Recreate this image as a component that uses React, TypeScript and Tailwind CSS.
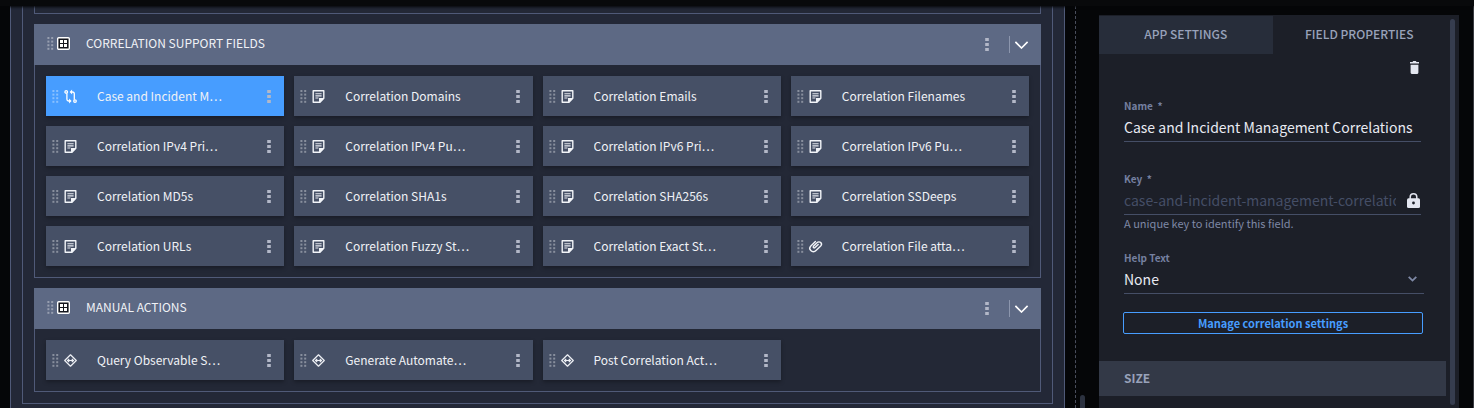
import type { ReactNode } from 'react'

type Kind = 'reference' | 'note' | 'file' | 'action'
type Field = { label: string; kind: Kind; selected?: boolean }

const supportFields: Field[] = [
  { label: 'Case and Incident M…', kind: 'reference', selected: true },
  { label: 'Correlation Domains', kind: 'note' },
  { label: 'Correlation Emails', kind: 'note' },
  { label: 'Correlation Filenames', kind: 'note' },
  { label: 'Correlation IPv4 Pri…', kind: 'note' },
  { label: 'Correlation IPv4 Pu…', kind: 'note' },
  { label: 'Correlation IPv6 Pri…', kind: 'note' },
  { label: 'Correlation IPv6 Pu…', kind: 'note' },
  { label: 'Correlation MD5s', kind: 'note' },
  { label: 'Correlation SHA1s', kind: 'note' },
  { label: 'Correlation SHA256s', kind: 'note' },
  { label: 'Correlation SSDeeps', kind: 'note' },
  { label: 'Correlation URLs', kind: 'note' },
  { label: 'Correlation Fuzzy St…', kind: 'note' },
  { label: 'Correlation Exact St…', kind: 'note' },
  { label: 'Correlation File atta…', kind: 'file' },
]

const manualActions: Field[] = [
  { label: 'Query Observable S…', kind: 'action' },
  { label: 'Generate Automate…', kind: 'action' },
  { label: 'Post Correlation Act…', kind: 'action' },
]

function DragHandle() {
  return (
    <svg className="h-[13px] w-[7px] shrink-0 cursor-grab" viewBox="0 0 7 13" fill="#fff" fillOpacity="0.36" aria-hidden="true">
      {[0, 3.6, 7.2, 10.8].map((y) => (
        <g key={y}>
          <rect x="0.4" y={y} width="2" height="2" />
          <rect x="4.2" y={y} width="2" height="2" />
        </g>
      ))}
    </svg>
  )
}

function Kebab({ label }: { label: string }) {
  return (
    <button type="button" aria-label={`${label} menu`} className="shrink-0">
      <svg className="block h-[13px] w-1" viewBox="0 0 4 13" fill="#b3b8c8" aria-hidden="true">
        <rect x="0.2" y="0" width="3.6" height="3" />
        <rect x="0.2" y="5" width="3.6" height="3" />
        <rect x="0.2" y="10" width="3.6" height="3" />
      </svg>
    </button>
  )
}

function KindIcon({ kind }: { kind: Kind }) {
  const cls = 'h-[13px] w-[13px] shrink-0 overflow-visible'
  if (kind === 'reference')
    return (
      <svg className={cls} viewBox="0 0 13 13" fill="none" stroke="#fff" strokeWidth="1.3" aria-hidden="true">
        <circle cx="2.2" cy="1.9" r="1.3" />
        <circle cx="11" cy="11.1" r="1.3" />
        <path d="M2.9 3.2v6q0 1.8 1.8 1.8h1.3" />
        <path d="M10.3 9.8V3.8q0-1.8-1.8-1.8H7.2" />
        <path d="M5.1 8.5l2.5 2.5-2.5 2.5zM8.1-0.5L5.6 2l2.5 2.5z" fill="#fff" stroke="none" />
      </svg>
    )
  if (kind === 'file')
    return (
      <svg className={cls} viewBox="0 0 13 13" fill="none" stroke="#f2f4f8" strokeWidth="1.4" strokeLinecap="round" aria-hidden="true">
        <path d="M9.2 4.4L5.8 7.7a1 1 0 0 1-1.4-1.4l3.8-3.7a2.4 2.4 0 0 1 3.5 0 2.5 2.5 0 0 1 0 3.5l-4.7 4.5a3.6 3.6 0 0 1-5.2 0 3.4 3.4 0 0 1 0-4.7L6.4 1.5" />
      </svg>
    )
  if (kind === 'action')
    return (
      <svg className={cls} viewBox="0 0 13 13" fill="none" stroke="#eef0f5" strokeWidth="1.2" aria-hidden="true">
        <path d="M6.5 0.8l5.8 5.7-5.8 5.7L0.7 6.5z" strokeLinejoin="round" />
        <path d="M3.8 6.5h5.4M5.2 4.8L3.5 6.5l1.7 1.7M7.8 4.8l1.7 1.7-1.7 1.7" />
      </svg>
    )
  return (
    <svg className={cls} viewBox="0 0 13 13" aria-hidden="true">
      <path d="M1.2 0.8h10.6v7.4L8 12.2H1.2z" fill="none" stroke="#f2f4f8" strokeWidth="1.4" strokeLinejoin="round" />
      <path d="M7 12.6V8h5.2z" fill="#f2f4f8" />
      <path d="M3.4 3.8h6.2M3.4 5.9h6.2M3.4 8h3" stroke="#e3e6ee" strokeWidth="1.1" />
    </svg>
  )
}

function FieldCard({ field }: { field: Field }) {
  return (
    <div
      className={`flex h-10 min-w-0 items-center pr-[13px] pl-1.5 shadow-[0_2px_4px_rgba(0,0,0,0.3)] ${
        field.selected ? 'bg-[#479dff]' : 'bg-[#465066]'
      }`}
    >
      <DragHandle />
      <span className="w-[5px] shrink-0" />
      <KindIcon kind={field.kind} />
      <span className="ml-5 flex-1 truncate text-[12px] leading-5 text-[#f0f2f6]">{field.label}</span>
      <Kebab label={field.label} />
    </div>
  )
}

function Section({ title, fields }: { title: string; fields: Field[] }) {
  return (
    <section className="border border-[#505a78] bg-[#232836]">
      <header className="-mx-px -mt-px flex h-[41px] items-center bg-[#5d6984] pr-3 pl-[13px]">
        <div className="flex min-w-0 flex-1 items-center pb-[3px]">
          <DragHandle />
          <svg className="ml-[3px] h-[13px] w-[13px] shrink-0" viewBox="0 0 13 13" aria-hidden="true">
            <rect x="0.7" y="0.7" width="11.6" height="11.6" rx="1" fill="#14161d" stroke="#fff" strokeWidth="1.4" />
            <path d="M3 3h3v3h-3zM7 3h3v3h-3zM3 7h3v3h-3zM7 7h3v3h-3z" fill="#fff" />
          </svg>
          <h2 className="ml-4 truncate text-[12px] leading-5 text-[#f0f2f6]">{title}</h2>
        </div>
        <Kebab label={title} />
        <span className="ml-5 h-[17px] w-px bg-[#8c96ad]" />
        <button type="button" aria-label={`Collapse ${title}`} className="ml-[5px]">
          <svg className="block h-2 w-[14px]" viewBox="0 0 14 8" fill="none" stroke="#fff" strokeWidth="1.6" aria-hidden="true">
            <path d="M0.4 0.9L6.5 7L12.6 0.9" />
          </svg>
        </button>
      </header>
      <div className="grid grid-cols-4 gap-[10px] px-[11px] pt-[11px] pb-[11px]">
        {fields.map((field) => (
          <FieldCard key={field.label} field={field} />
        ))}
      </div>
    </section>
  )
}

function FieldLabel({ htmlFor, children }: { htmlFor: string; children: ReactNode }) {
  return (
    <label htmlFor={htmlFor} className="block text-[10px] leading-4 font-semibold text-[#7580a0]">
      {children}
    </label>
  )
}

function Properties() {
  return (
    <aside className="mt-[9px] flex w-[360px] shrink-0 bg-[#1c1f28] pt-px">
      <div className="min-w-0 flex-1">
        <div role="tablist" className="grid h-[38px] grid-cols-2 text-[12px] leading-5 font-medium text-[#98a2ba]">
          <button type="button" role="tab" aria-selected="false" className="bg-[#272d3a] pb-[2px]">
            APP SETTINGS
          </button>
          <button type="button" role="tab" aria-selected="true" className="pb-[2px]">
            FIELD PROPERTIES
          </button>
        </div>
        <form className="px-[25px]" onSubmit={(e) => e.preventDefault()}>
          <div className="flex justify-end pt-[7px] pr-[2px]">
            <button type="button" aria-label="Delete field">
              <svg className="block h-[13px] w-[9px]" viewBox="0 0 9 13" fill="#e3e6f0" aria-hidden="true">
                <path d="M0 1h2.5L3.2 0h2.6l.7 1H9v1.5H0zM0.6 3.7h7.8v7.9q0 1.4-1.2 1.4H1.8q-1.2 0-1.2-1.4z" />
              </svg>
            </button>
          </div>
          <div className="pt-6">
            <FieldLabel htmlFor="field-name">Name&nbsp; *</FieldLabel>
            <input
              id="field-name"
              defaultValue="Case and Incident Management Correlations"
              className="block h-[28px] w-full border-b border-[#454e66] bg-transparent pb-[2px] text-[14px] leading-5 text-[#e8eaf2] outline-none"
            />
          </div>
          <div className="pt-[29px]">
            <FieldLabel htmlFor="field-key">Key&nbsp; *</FieldLabel>
            <div className="flex h-[28px] items-center border-b border-[#454e66] text-[#454e66]">
              <input
                id="field-key"
                readOnly
                value="case-and-incident-management-correlations"
                className="h-[27px] min-w-0 flex-1 bg-transparent pb-[2px] text-[14px] leading-5 outline-none"
              />
              <svg className="mr-px ml-[11px] h-[15px] w-[13px] shrink-0" viewBox="0 0 13 15" aria-hidden="true">
                <path d="M3.2 6V3.9a3.3 3.1 0 0 1 6.6 0V6" fill="none" stroke="#e3e6f0" strokeWidth="1.5" />
                <rect y="5.2" width="13" height="9.8" rx="1.5" fill="#e3e6f0" />
                <circle cx="6.5" cy="10" r="1.4" fill="#1c1f28" />
              </svg>
            </div>
            <p className="text-[11px] leading-4 text-[#7f89a6]">A unique key to identify this field.</p>
          </div>
          <div className="-mr-[3px] pt-[19px]">
            <FieldLabel htmlFor="help-text">Help Text</FieldLabel>
            <div className="relative">
              <select
                id="help-text"
                className="block h-[28px] w-full appearance-none border-b border-[#454e66] bg-transparent pb-[2px] text-[14px] leading-5 text-[#e8eaf2] outline-none"
              >
                <option>None</option>
              </select>
              <svg className="pointer-events-none absolute top-[10px] right-[7px] h-[6px] w-[9px]" viewBox="0 0 9 6" fill="none" stroke="#7f89a6" strokeWidth="1.8" aria-hidden="true">
                <path d="M0.7 0.8L4.5 4.6L8.3 0.8" />
              </svg>
            </div>
          </div>
          <button
            type="button"
            className="mt-[18px] -mr-[2px] -ml-px block h-[22px] w-[calc(100%+3px)] rounded-xs border border-[#479dff] text-[11px] leading-4 font-bold text-[#479dff]"
          >
            Manage correlation settings
          </button>
        </form>
        <h3 className="mt-[27px] h-[35px] bg-[#333947] px-[25px] text-[12px] leading-[34px] font-bold text-[#98a2ba]">SIZE</h3>
      </div>
      <div className="flex w-[13px] shrink-0 px-1 pt-[3px] pb-[3px]">
        <div className="w-[5px] rounded-full bg-[#363d4f]" />
      </div>
    </aside>
  )
}

export default function App() {
  return (
    <div className="flex min-h-screen flex-col overflow-hidden bg-[#050608] font-['Noto_Sans_CJK_SC',sans-serif]">
      <div className="z-10 h-[6px] shrink-0 bg-[#08090b] shadow-[0_1px_3px_0_#050608]" />
      <div className="flex flex-1">
        <main className="ml-[10px] min-w-0 flex-1 border-x border-[#505a78] bg-[#232837] px-[11px] pb-1">
          <div className="flex flex-col gap-[10px] border-x border-b border-[#505a78] bg-[#232837] px-[11px] pb-[11px]">
            <div className="h-2 border-x border-b border-[#505a78] bg-[#232836]" />
            <Section title="CORRELATION SUPPORT FIELDS" fields={supportFields} />
            <Section title="MANUAL ACTIONS" fields={manualActions} />
          </div>
        </main>
        <div className="ml-[10px] flex w-6 shrink-0 items-end border-l border-dashed border-[#4a4e5c] pl-1">
          <div className="h-[13px] w-[5px] rounded-t-sm bg-[#2c3240]" />
        </div>
        <Properties />
        <div className="ml-[14px] w-px bg-[#3a3c42]" />
      </div>
    </div>
  )
}
